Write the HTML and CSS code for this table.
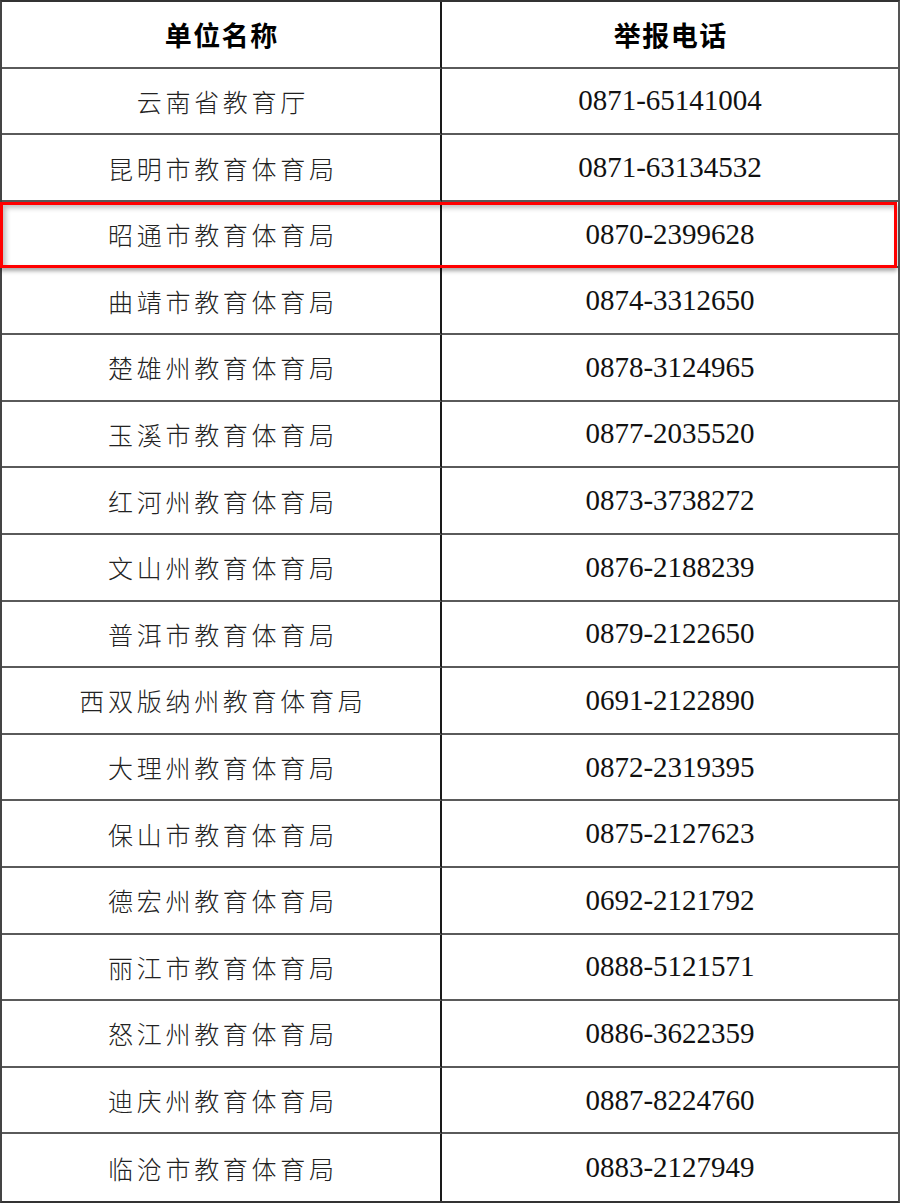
FILE: index.html
```html
<!DOCTYPE html>
<html lang="zh-CN">
<head>
<meta charset="utf-8">
<title>举报电话</title>
<link rel="stylesheet" href="styles.css">
</head>
<body>
<div class="page">
  <div class="table">
    <div class="cell head">单位名称</div><div class="cell head right">举报电话</div>
    <div class="cell name">云南省教育厅</div><div class="cell tel">0871-65141004</div>
    <div class="cell name">昆明市教育体育局</div><div class="cell tel">0871-63134532</div>
    <div class="cell name">昭通市教育体育局</div><div class="cell tel">0870-2399628</div>
    <div class="cell name">曲靖市教育体育局</div><div class="cell tel">0874-3312650</div>
    <div class="cell name">楚雄州教育体育局</div><div class="cell tel">0878-3124965</div>
    <div class="cell name">玉溪市教育体育局</div><div class="cell tel">0877-2035520</div>
    <div class="cell name">红河州教育体育局</div><div class="cell tel">0873-3738272</div>
    <div class="cell name">文山州教育体育局</div><div class="cell tel">0876-2188239</div>
    <div class="cell name">普洱市教育体育局</div><div class="cell tel">0879-2122650</div>
    <div class="cell name">西双版纳州教育体育局</div><div class="cell tel">0691-2122890</div>
    <div class="cell name">大理州教育体育局</div><div class="cell tel">0872-2319395</div>
    <div class="cell name">保山市教育体育局</div><div class="cell tel">0875-2127623</div>
    <div class="cell name">德宏州教育体育局</div><div class="cell tel">0692-2121792</div>
    <div class="cell name">丽江市教育体育局</div><div class="cell tel">0888-5121571</div>
    <div class="cell name">怒江州教育体育局</div><div class="cell tel">0886-3622359</div>
    <div class="cell name">迪庆州教育体育局</div><div class="cell tel">0887-8224760</div>
    <div class="cell name last">临沧市教育体育局</div><div class="cell tel last">0883-2127949</div>
  </div>
  <div class="highlight"></div>
</div>
</body>
</html>
```

FILE: styles.css
```css
html, body {
  margin: 0;
  padding: 0;
  background: #fff;
}

.page {
  position: relative;
  width: 900px;
  height: 1203px;
}

.table {
  box-sizing: border-box;
  width: 900px;
  height: 1203px;
  display: grid;
  grid-template-columns: 440px 1fr;
  grid-template-rows: repeat(18, 1fr);
  border-top: 2px solid #333;
  border-left: 2px solid #444;
  border-right: 2px solid #555;
  border-bottom: 2px solid #333;
}

.cell {
  display: flex;
  align-items: center;
  justify-content: center;
  border-bottom: 2px solid #5a5a5a;
  color: #111;
}

.cell:nth-child(odd) {
  border-right: 2px solid #1a1a1a;
}

.cell.last {
  border-bottom: none;
}

.head {
  font-family: "Noto Sans CJK SC", sans-serif;
  font-weight: 700;
  font-size: 27px;
  letter-spacing: 1.5px;
  padding-left: 1.5px;
  color: #000;
}

.name {
  font-family: "Noto Sans CJK SC", sans-serif;
  font-weight: 300;
  font-size: 25px;
  letter-spacing: 3.7px;
  padding-left: 3.7px;
  color: #222;
}

.tel {
  font-family: "Liberation Serif", "Times New Roman", serif;
  font-size: 29px;
  color: #111;
}

.highlight {
  position: absolute;
  left: 0;
  top: 202px;
  width: 897px;
  height: 66px;
  box-sizing: border-box;
  border: 3px solid #ff0000;
  box-shadow: 0 3px 4px rgba(0, 0, 0, 0.35), inset 3px 3px 5px rgba(0, 0, 0, 0.25);
  pointer-events: none;
}
```
